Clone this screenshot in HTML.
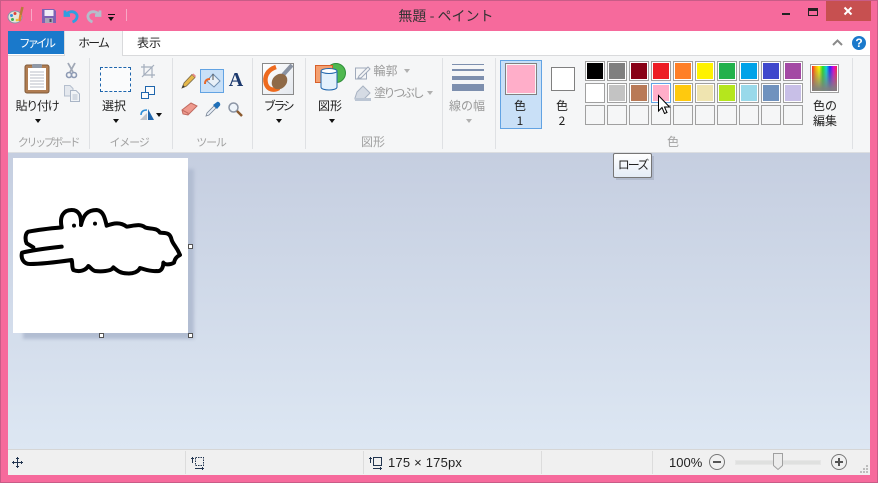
<!DOCTYPE html>
<html><head><meta charset="utf-8">
<style>
html,body{margin:0;padding:0}
body{width:878px;height:483px;overflow:hidden;position:relative;background:#f66a9c;font-family:"Liberation Sans","Noto Sans CJK JP",sans-serif;color:#222}
.a{position:absolute}
.t{position:absolute;font-size:12px;line-height:16px;white-space:nowrap;text-align:center;font-family:"Noto Sans CJK JP","Liberation Sans",sans-serif;transform:translateX(-50%)}
.g{color:#a2a2a2}
.d{position:absolute;width:1px;top:58px;height:91px;background:#dfe1e4}
.s{position:absolute;width:1px;top:451px;height:23px;background:#dcdcdc}
.c{position:absolute;width:18px;height:18px;border:1px solid #a0a0a0;background:#fff}
.c i{position:absolute;left:1px;top:1px;width:16px;height:16px;display:block}
.c.e{background:#f5f6f7}
.tri{position:absolute;width:0;height:0;border-left:3.5px solid transparent;border-right:3.5px solid transparent;border-top:4px solid #111}
.tri.l{border-top-color:#b0b0b0}
svg{position:absolute;overflow:visible}
</style></head><body>

<div class="a" style="left:0;top:0;width:878px;height:1px;background:#c85c87"></div>
<div class="a" style="left:0;top:482px;width:878px;height:1px;background:#c85c87"></div>
<div class="a" style="left:0;top:0;width:1px;height:483px;background:#c85c87"></div>
<div class="a" style="left:877px;top:0;width:1px;height:483px;background:#c85c87"></div>

<!-- quick access -->
<svg style="left:8px;top:6px" width="18" height="18" viewBox="0 0 18 18">
<ellipse cx="7" cy="11" rx="7" ry="6" fill="#e9e4d8" stroke="#8a94a8"/>
<circle cx="3.500" cy="9.500" r="1.500" fill="#3a8fd8"/><circle cx="7" cy="7.500" r="1.500" fill="#e0403a"/><circle cx="4.500" cy="13.500" r="1.500" fill="#3fae55"/><circle cx="9" cy="14" r="1.300" fill="#e8c83a"/>
<path d="M14.500 1L12.500 9" stroke="#b87a3a" stroke-width="2.500"/><path d="M12.500 9L11.500 15" stroke="#e8802a" stroke-width="2.500"/>
</svg>
<div class="a" style="left:31px;top:9px;width:1px;height:12px;background:#f8a8c6"></div>
<svg style="left:42px;top:9px" width="14" height="14" viewBox="0 0 14 14">
<path d="M0 0H12L14 2V14H0Z" fill="#7d62b4"/><rect x="2.500" y="1" width="9" height="6" fill="#f0eef6"/><rect x="3" y="9" width="8" height="5" fill="#a9a4b6"/><rect x="7.500" y="10" width="2" height="3" fill="#4a4a60"/>
</svg>
<svg style="left:64px;top:9px" width="15" height="15" viewBox="0 0 15 15">
<path d="M1 1.500V6.500H6 M2 6C4 2.500 9 1.500 12 4.500C14.500 7.500 12.500 11.500 8.500 13" fill="none" stroke="#2f9fe0" stroke-width="2.800"/>
</svg>
<svg style="left:86px;top:9px" width="15" height="15" viewBox="0 0 15 15">
<path d="M14 1.500V6.500H9 M13 6C11 2.500 6 1.500 3 4.500C.5 7.500 2.500 11.500 6.500 13" fill="none" stroke="#b4bdcb" stroke-width="2.800"/>
</svg>
<div class="a" style="left:108px;top:14px;width:7px;height:1px;background:#111"></div>
<div class="tri" style="left:108px;top:17px"></div>
<div class="a" style="left:126px;top:9px;width:1px;height:12px;background:#f8a8c6"></div>

<div class="t" style="left:446px;top:6px;font-size:14px;line-height:20px;color:#333">無題 - ペイント</div>

<!-- window controls -->
<div class="a" style="left:782px;top:13px;width:8px;height:2px;background:#222"></div>
<div class="a" style="left:808px;top:8px;width:8px;height:4px;border:1px solid #222;border-top-width:3px"></div>
<div class="a" style="left:826px;top:1px;width:45px;height:20px;background:#c75050"></div>
<svg style="left:843px;top:6px" width="10" height="10" viewBox="0 0 10 10"><path d="M1.500 1.500L8.500 8.500M8.500 1.500L1.500 8.500" stroke="#fff" stroke-width="2"/></svg>

<!-- client -->
<div class="a" style="left:8px;top:31px;width:862px;height:444px;background:#fff"></div>
<div class="a" style="left:8px;top:31px;width:862px;height:24px;background:#fff;border-bottom:1px solid #d9dadc"></div>
<div class="a" style="left:8px;top:31px;width:56px;height:23px;background:#1a79cb"></div>
<div class="t" style="left:36px;top:35px;color:#fff;font-size:11.500px;letter-spacing:-3px">ファイル</div>
<div class="a" style="left:64px;top:31px;width:57px;height:25px;background:#f5f6f7;border:1px solid #d9dadc;border-bottom:0;border-top:0;box-sizing:content-box"></div>
<div class="t" style="left:93px;top:35px;letter-spacing:-2px">ホーム</div>
<div class="t" style="left:149px;top:35px">表示</div>
<svg style="left:832px;top:39px" width="11" height="7" viewBox="0 0 11 7"><path d="M1 6L5.500 1.500L10 6" fill="none" stroke="#8a8a8a" stroke-width="2"/></svg>
<div class="a" style="left:852px;top:36px;width:14px;height:14px;border-radius:50%;background:#1a79cb;color:#fff;font:bold 12px/14px 'Liberation Sans',sans-serif;text-align:center">?</div>

<!-- ribbon -->
<div class="a" style="left:8px;top:56px;width:862px;height:96px;background:#f5f6f7;border-bottom:1px solid #dcdee1"></div>
<div class="d" style="left:89px"></div>
<div class="d" style="left:172px"></div>
<div class="d" style="left:252px"></div>
<div class="d" style="left:305px"></div>
<div class="d" style="left:442px"></div>
<div class="d" style="left:495px"></div>
<div class="d" style="left:852px"></div>

<!-- clipboard -->
<svg style="left:24px;top:62px" width="28" height="32" viewBox="0 0 28 32">
<rect x="1" y="3" width="24" height="28" rx="2" fill="#b07d52" stroke="#7f5a3a"/>
<rect x="4" y="6" width="18" height="22" fill="#fff"/>
<path d="M6 10H20M6 13H20M6 16H20M6 19H20M6 22H20M6 25H20" stroke="#b9bec7"/>
<rect x="8" y="2" width="10" height="4" rx="1" fill="#8f98a6"/>
</svg>
<svg style="left:66px;top:62px" width="11" height="17" viewBox="0 0 11 17">
<path d="M2 1L7 10M9 1L4 10" stroke="#a0a8b6" stroke-width="1.800"/><circle cx="3" cy="13" r="2.500" fill="none" stroke="#8d9ab4" stroke-width="1.600"/><circle cx="8" cy="13" r="2.500" fill="none" stroke="#8d9ab4" stroke-width="1.600"/>
</svg>
<svg style="left:64px;top:85px" width="16" height="17" viewBox="0 0 16 17">
<path d="M.5.5H6L9 3.500V11H.5Z" fill="#e4e8ee" stroke="#b5bfce"/><path d="M6.500 5.500H12L15.500 9V16.500H6.500Z" fill="#f0f3f6" stroke="#a9b5c6"/><path d="M8.500 10H13.500M8.500 12H13.500M8.500 14H13.500" stroke="#b5bfce"/>
</svg>
<div class="t" style="left:37px;top:98px;letter-spacing:-1.300px">貼り付け</div>
<div class="tri" style="left:35px;top:119px"></div>
<div class="t g" style="left:48px;top:134px;font-size:11px;letter-spacing:-2.400px">クリップボード</div>

<!-- image -->
<div class="a" style="left:100px;top:67px;width:29px;height:23px;border:1px dashed #1f66ad;background:#fafbfc"></div>
<div class="t" style="left:114px;top:98px">選択</div>
<div class="tri" style="left:113px;top:119px"></div>
<svg style="left:141px;top:64px" width="14" height="14" viewBox="0 0 14 14"><path d="M3 0V11H14M0 3H11V14M1 13L13 1" fill="none" stroke="#a4aebd" stroke-width="1.200"/></svg>
<svg style="left:141px;top:86px" width="14" height="13" viewBox="0 0 14 13"><rect x="4.500" y=".5" width="9" height="8" fill="#fafbfc" stroke="#1f66ad"/><rect x=".5" y="6.500" width="7" height="6" fill="#fafbfc" stroke="#1f66ad"/></svg>
<svg style="left:139px;top:108px" width="17" height="13" viewBox="0 0 17 13"><path d="M1 12L8 5V12Z" fill="#c0c4ca"/><path d="M9 1L15 12H9Z" fill="#1f66ad"/><path d="M2 7C2 3 5 2 8 2" fill="none" stroke="#2f8fd8" stroke-width="1.500"/></svg>
<div class="tri" style="left:156px;top:113px"></div>
<div class="t g" style="left:129px;top:134px;font-size:11px;letter-spacing:-1.200px">イメージ</div>

<!-- tools -->
<svg style="left:181px;top:73px" width="15" height="16" viewBox="0 0 15 16"><path d="M1 15L3 10L11 1.500L14 4.500L5.500 13Z" fill="#e6b84a" stroke="#7a6a4a" stroke-width=".8"/><path d="M1 15L2 12L4 14Z" fill="#333"/><path d="M11 1.500L14 4.500L15 3L12.500 .5Z" fill="#e88a8a"/></svg>
<div class="a" style="left:200px;top:69px;width:22px;height:22px;background:#c9e0f7;border:1px solid #62a3e3"></div>
<svg style="left:204px;top:73px" width="18" height="16" viewBox="0 0 18 16"><path d="M9 1L16 8L10 14L3 8Z" fill="#e8f0f8" stroke="#6f8eb0"/><path d="M1 11C1 7 3 6 6 6" fill="none" stroke="#e8682a" stroke-width="2"/><path d="M9 1V7" stroke="#555"/></svg>
<div class="a" style="left:228px;top:70px;width:16px;height:20px;font:bold 20px/20px 'Liberation Serif',serif;color:#1d3a6e;text-align:center">A</div>
<svg style="left:181px;top:102px" width="17" height="14" viewBox="0 0 17 14"><path d="M1 8L10 1L16 4L7 13L2 12Z" fill="#ef9a8e" stroke="#c06a60"/><path d="M1 8L7 11V13" fill="none" stroke="#c06a60"/></svg>
<svg style="left:205px;top:101px" width="16" height="16" viewBox="0 0 16 16"><path d="M1 15L2 12L9 5L11 7L4 14Z" fill="#e8eef6" stroke="#7a8798" stroke-width=".8"/><path d="M8 4L12 8L15 4.500C16 3 14 0 12 1Z" fill="#1f6fb8"/></svg>
<svg style="left:228px;top:102px" width="15" height="15" viewBox="0 0 15 15"><circle cx="5.500" cy="5.500" r="4.500" fill="#eef4fa" stroke="#8a94a4" stroke-width="1.500"/><path d="M9 9L14 14" stroke="#8b5a2f" stroke-width="2.500"/></svg>
<div class="t g" style="left:211px;top:134px;font-size:11px;letter-spacing:-1.200px">ツール</div>

<!-- brush -->
<div class="a" style="left:262px;top:63px;width:30px;height:30px;background:linear-gradient(135deg,#fff,#e4e8ee);border:1px solid #8a8a8a"></div>
<svg style="left:263px;top:64px" width="30" height="30" viewBox="0 0 30 30">
<path d="M13 3C4 6 1 13 3 20C5 26 11 27 16 24" fill="none" stroke="#ee6a1e" stroke-width="4.500"/>
<path d="M29 1L20 11" stroke="#8a93a3" stroke-width="4"/>
<ellipse cx="16.500" cy="17.500" rx="7" ry="8.500" transform="rotate(45 16.500 17.500)" fill="#8f6a48"/>
</svg>
<div class="t" style="left:278px;top:98px;letter-spacing:-2.400px">ブラシ</div>
<div class="tri" style="left:276px;top:119px"></div>

<!-- shapes -->
<svg style="left:315px;top:62px" width="32" height="30" viewBox="0 0 32 30">
<circle cx="21" cy="11" r="9.500" fill="#4fb84f" stroke="#2f8f3a"/>
<rect x=".5" y="3.500" width="17" height="17" fill="#f4a070" stroke="#d8602a"/>
<path d="M6 9V25C6 29 22 29 22 25V9Z" fill="#e4f1fc" stroke="#1f66ad"/>
<ellipse cx="14" cy="9" rx="8" ry="2.500" fill="#fff" stroke="#1f66ad"/>
</svg>
<div class="t" style="left:330px;top:98px">図形</div>
<div class="tri" style="left:329px;top:119px"></div>
<svg style="left:355px;top:65px" width="16" height="15" viewBox="0 0 16 15"><rect x=".5" y="3" width="11" height="11" fill="none" stroke="#a0aabb"/><path d="M4 11L13 2L15 4L6 13L3 13Z" fill="#f5f6f7" stroke="#a0aabb"/></svg>
<div class="t g" style="left:385.500px;top:63px;color:#999">輪郭</div>
<div class="tri l" style="left:404px;top:69px"></div>
<svg style="left:355px;top:85px" width="17" height="16" viewBox="0 0 17 16"><path d="M8 1L15 8L9 14H0V13L2 7Z" fill="#d5dbe4" stroke="#a8b2c2"/><rect x="0" y="13" width="16" height="3" fill="#bcc6d4"/></svg>
<div class="t g" style="left:398px;top:85px;color:#999;letter-spacing:-2.400px">塗りつぶし</div>
<div class="tri l" style="left:427px;top:91px"></div>
<div class="t g" style="left:373px;top:134px;font-size:12px">図形</div>

<!-- line width -->
<div class="a" style="left:452px;top:64px;width:32px;height:1px;background:#7d8fae"></div>
<div class="a" style="left:452px;top:69px;width:32px;height:2px;background:#7d8fae"></div>
<div class="a" style="left:452px;top:76px;width:32px;height:4px;background:#7d8fae"></div>
<div class="a" style="left:452px;top:84px;width:32px;height:7px;background:#7d8fae"></div>
<div class="t g" style="left:467px;top:98px;color:#999">線の幅</div>
<div class="tri l" style="left:466px;top:119px"></div>

<!-- color 1/2 -->
<div class="a" style="left:500px;top:60px;width:40px;height:67px;background:#c9e0f7;border:1px solid #62a3e3"></div>
<div class="a" style="left:505px;top:63px;width:30px;height:30px;background:#ffaec9;border:1px solid #808080;box-shadow:inset 0 0 0 1px #f5f6f7"></div>
<div class="t" style="left:520px;top:98px">色</div>
<div class="t" style="left:520px;top:113px">1</div>
<div class="a" style="left:551px;top:67px;width:22px;height:22px;background:#fff;border:1px solid #808080"></div>
<div class="t" style="left:562px;top:98px">色</div>
<div class="t" style="left:562px;top:113px">2</div>

<!-- palette -->
<div class="c" style="left:585px;top:61px"><i style="background:#000"></i></div>
<div class="c" style="left:607px;top:61px"><i style="background:#7f7f7f"></i></div>
<div class="c" style="left:629px;top:61px"><i style="background:#880015"></i></div>
<div class="c" style="left:651px;top:61px"><i style="background:#ed1c24"></i></div>
<div class="c" style="left:673px;top:61px"><i style="background:#ff7f27"></i></div>
<div class="c" style="left:695px;top:61px"><i style="background:#fff200"></i></div>
<div class="c" style="left:717px;top:61px"><i style="background:#22b14c"></i></div>
<div class="c" style="left:739px;top:61px"><i style="background:#00a2e8"></i></div>
<div class="c" style="left:761px;top:61px"><i style="background:#3f48cc"></i></div>
<div class="c" style="left:783px;top:61px"><i style="background:#a349a4"></i></div>
<div class="c" style="left:585px;top:83px"><i style="background:#fff"></i></div>
<div class="c" style="left:607px;top:83px"><i style="background:#c3c3c3"></i></div>
<div class="c" style="left:629px;top:83px"><i style="background:#b97a57"></i></div>
<div class="c" style="left:651px;top:83px;border-color:#62a3e3"><i style="background:#ffaec9"></i></div>
<div class="c" style="left:673px;top:83px"><i style="background:#ffc90e"></i></div>
<div class="c" style="left:695px;top:83px"><i style="background:#efe4b0"></i></div>
<div class="c" style="left:717px;top:83px"><i style="background:#b5e61d"></i></div>
<div class="c" style="left:739px;top:83px"><i style="background:#99d9ea"></i></div>
<div class="c" style="left:761px;top:83px"><i style="background:#7092be"></i></div>
<div class="c" style="left:783px;top:83px"><i style="background:#c8bfe7"></i></div>
<div class="c e" style="left:585px;top:105px"></div>
<div class="c e" style="left:607px;top:105px"></div>
<div class="c e" style="left:629px;top:105px"></div>
<div class="c e" style="left:651px;top:105px"></div>
<div class="c e" style="left:673px;top:105px"></div>
<div class="c e" style="left:695px;top:105px"></div>
<div class="c e" style="left:717px;top:105px"></div>
<div class="c e" style="left:739px;top:105px"></div>
<div class="c e" style="left:761px;top:105px"></div>
<div class="c e" style="left:783px;top:105px"></div>

<!-- edit colours -->
<div class="a" style="left:810px;top:64px;width:27px;height:27px;border:1px solid #a0a0a0;background:#fff"></div>
<div class="a" style="left:812px;top:66px;width:25px;height:25px;background:linear-gradient(180deg,rgba(128,128,128,0) 0%,rgba(128,128,128,.95) 90%),linear-gradient(90deg,#f22,#fa0,#ff0,#2d2,#0dd,#22f,#d0d,#f24)"></div>
<div class="t" style="left:825px;top:98px">色の</div>
<div class="t" style="left:825px;top:113px">編集</div>
<div class="t g" style="left:673px;top:134px">色</div>

<!-- canvas area -->
<div class="a" style="left:8px;top:153px;width:862px;height:296px;background:linear-gradient(180deg,#c5cee0,#dde7f3)"></div>
<div class="a" style="left:23px;top:169px;width:171px;height:170px;background:#b2bdd2;filter:blur(1.500px)"></div>
<div class="a" style="left:13px;top:158px;width:175px;height:175px;background:#fff"></div>
<svg style="left:0;top:190px" width="200" height="160" viewBox="0 0 600 480">
<path d="M185 112C178 80 190 60 215 60C235 60 245 75 243 105C250 75 262 60 290 60C310 62 315 85 320 107C340 100 360 95 380 110C400 108 420 100 435 112C450 118 470 112 480 128C495 130 510 125 515 150C520 165 530 170 540 195C530 200 525 205 522 218C510 225 495 225 490 218C490 235 482 245 470 243C450 245 435 238 420 234C415 245 400 252 380 250C360 250 350 240 340 232C335 245 300 245 285 243C275 240 270 230 265 228C258 240 240 248 220 240C215 230 218 220 215 210C180 215 130 222 90 222C70 222 62 205 66 188C100 180 140 175 185 170M185 112C150 115 110 120 85 125C75 130 75 150 80 160L100 172" fill="none" stroke="#000" stroke-width="12" stroke-linejoin="round" stroke-linecap="round"/>
<circle cx="222" cy="107" r="6"/><circle cx="285" cy="101" r="6"/>
</svg>
<div class="a" style="left:188px;top:244px;width:3px;height:3px;background:#fff;border:1px solid #555"></div>
<div class="a" style="left:99px;top:333px;width:3px;height:3px;background:#fff;border:1px solid #555"></div>
<div class="a" style="left:188px;top:333px;width:3px;height:3px;background:#fff;border:1px solid #555"></div>

<!-- tooltip -->
<div class="a" style="left:616px;top:156px;width:38px;height:24px;background:rgba(90,100,120,.2)"></div>
<div class="a" style="left:613px;top:153px;width:37px;height:23px;background:linear-gradient(180deg,#fff,#e4ecf6);border:1px solid #767676;border-radius:2px"></div>
<div class="t" style="left:632.500px;top:157px;letter-spacing:-2px">ローズ</div>

<!-- cursor -->
<svg style="left:658px;top:95px" width="13" height="20" viewBox="0 0 13 20"><path d="M.5.5V16L4 12.500L6.500 18.500L9 17.500L6.500 12H11.500Z" fill="#fff" stroke="#000"/></svg>

<!-- status -->
<div class="a" style="left:8px;top:449px;width:862px;height:25px;background:#f0f0f0;border-top:1px solid #d6d6d6;box-sizing:border-box"></div>
<div class="a" style="left:8px;top:474px;width:862px;height:1px;background:#f0f0f0"></div>
<div class="s" style="left:185px"></div>
<div class="s" style="left:363px"></div>
<div class="s" style="left:541px"></div>
<div class="s" style="left:652px"></div>
<svg style="left:12px;top:457px" width="11" height="11" viewBox="0 0 11 11"><path d="M5.500 0V11M0 5.500H11M4 1.500H7M4 9.500H7M1.500 4V7M9.500 4V7" stroke="#22354f" fill="none"/></svg>
<svg style="left:191px;top:456px" width="14" height="14" viewBox="0 0 14 14"><rect x="4.500" y="1.500" width="8" height="8" fill="none" stroke="#22354f" stroke-dasharray="1.500 1"/><path d="M1.500 1V7M0 2.500H3M4 12.500H13M11.500 11V14" stroke="#22354f" fill="none"/></svg>
<svg style="left:369px;top:456px" width="14" height="14" viewBox="0 0 14 14"><rect x="4.500" y="1.500" width="8" height="8" fill="none" stroke="#22354f"/><path d="M1.500 1V7M0 2.500H3M4 12.500H13M11.500 11V14" stroke="#22354f" fill="none"/></svg>
<div class="a" style="left:388px;top:455px;font:13px/16px 'Liberation Sans','Noto Sans CJK JP',sans-serif;color:#222;white-space:nowrap;letter-spacing:.2px">175 × 175px</div>
<div class="a" style="left:669px;top:455px;font:13px/16px 'Liberation Sans',sans-serif;color:#222;white-space:nowrap">100%</div>
<svg style="left:708px;top:453px" width="18" height="18" viewBox="0 0 18 18"><circle cx="9" cy="9" r="7.500" fill="#f0f0f0" stroke="#777"/><path d="M5 9H13" stroke="#555" stroke-width="2"/></svg>
<div class="a" style="left:735px;top:460px;width:84px;height:3px;background:#dfe0df;border:1px solid #e6e6e6"></div>
<svg style="left:772px;top:453px" width="12" height="18" viewBox="0 0 12 18"><path d="M1.500.5H10.500V12.500L6 16.500L1.500 12.500Z" fill="#ececec" stroke="#a0a0a0"/></svg>
<svg style="left:830px;top:453px" width="18" height="18" viewBox="0 0 18 18"><circle cx="9" cy="9" r="7.500" fill="#f0f0f0" stroke="#777"/><path d="M5 9H13M9 5V13" stroke="#555" stroke-width="2"/></svg>
<svg style="left:860px;top:465px" width="9" height="9" viewBox="0 0 9 9"><path d="M6 0h2v2H6zM3 3h2v2H3zM6 3h2v2H6zM0 6h2v2H0zM3 6h2v2H3zM6 6h2v2H6z" fill="#bdbdbd"/></svg>

</body></html>
